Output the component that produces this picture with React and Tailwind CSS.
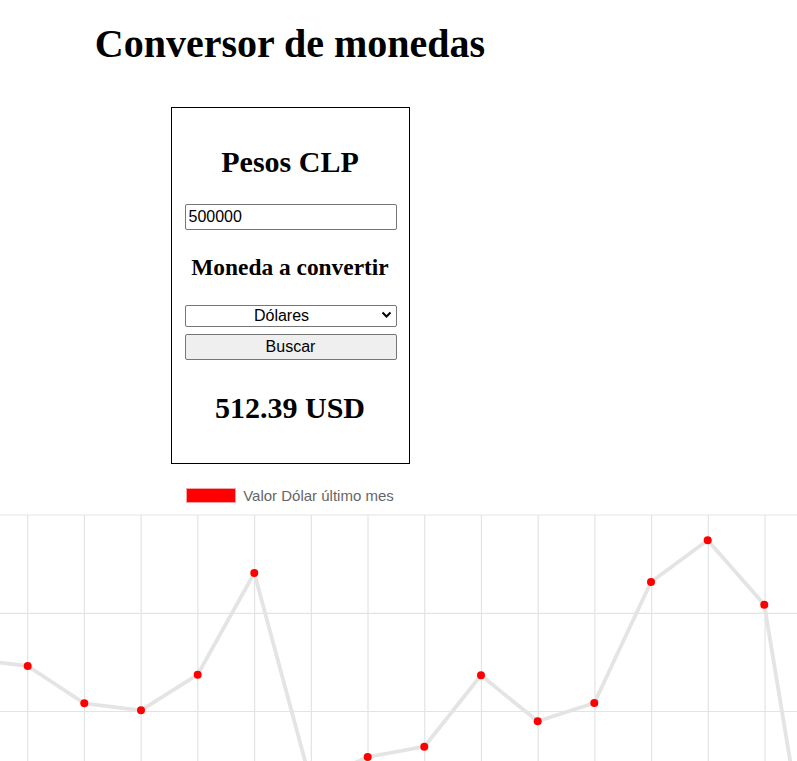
import { useState } from "react";

const puntos = [
  [-29, 149],
  [27.7, 156],
  [84.3, 193.3],
  [141, 200.3],
  [197.7, 164.7],
  [254.3, 63],
  [311, 273],
  [367.7, 247],
  [424.3, 236.7],
  [481, 165.3],
  [537.7, 211.3],
  [594.3, 193],
  [651, 72],
  [707.7, 30.3],
  [764.3, 94.7],
  [821, 437],
];

function Grafico() {
  const verticales = [];
  for (let i = 0; i < 15; i++) verticales.push(27.7 + i * 56.72);
  const linea = puntos.map(([x, y]) => `${x},${y}`).join(" ");

  return (
    <svg width="797" height="300" className="block" viewBox="0 0 797 300">
      {[5, 103.3, 201.5].map((y) => (
        <line key={y} x1="0" x2="797" y1={y} y2={y} stroke="#e3e3e3" strokeWidth="1.2" />
      ))}
      {verticales.map((x) => (
        <line key={x} x1={x} x2={x} y1="5" y2="300" stroke="#e3e3e3" strokeWidth="1.2" />
      ))}
      <polyline points={linea} fill="none" stroke="#e4e4e4" strokeWidth="3.8" strokeLinejoin="round" />
      {puntos.map(([x, y]) => (
        <circle key={x} cx={x} cy={y} r="4" fill="#ff0000" />
      ))}
    </svg>
  );
}

export default function App() {
  const [monto, setMonto] = useState("500000");

  return (
    <div className="min-h-screen bg-white text-black font-['Liberation_Serif',serif] overflow-hidden">
      <div className="w-[580px] flex flex-col items-center">
        <h1 className="mt-[21px] text-[40px] font-bold leading-[46px]">Conversor de monedas</h1>

        <div className="mt-[40px] w-[239px] border border-black flex flex-col items-center pt-[37px] pb-[38px]">
          <h2 className="text-[30px] font-bold leading-[34px]">Pesos CLP</h2>
          <input
            value={monto}
            onChange={(e) => setMonto(e.target.value)}
            className="mt-[25px] ml-[1px] w-[212px] h-[26px] px-[3px] border border-[#767676] rounded-[2px] bg-white font-['Liberation_Sans',Arial,sans-serif] text-[16px] outline-none"
          />
          <h3 className="mt-[24px] text-[23.4px] font-bold leading-[27px]">Moneda a convertir</h3>
          <div className="relative mt-[23px] ml-[1px] w-[212px]">
            <select className="w-[212px] h-[22px] appearance-none border border-[#767676] rounded-[2px] bg-white text-center pr-[18px] font-['Liberation_Sans',Arial,sans-serif] text-[16px] leading-[20px]">
              <option>Dólares</option>
            </select>
            <svg
              className="absolute right-[5px] top-[7px] pointer-events-none"
              width="11"
              height="8"
              viewBox="0 0 11 8"
            >
              <path d="M1.5 1.5 L5.5 5.5 L9.5 1.5" fill="none" stroke="#000" strokeWidth="2" />
            </svg>
          </div>
          <button className="mt-[6px] ml-[1px] w-[212px] h-[26px] border border-[#767676] rounded-[2px] bg-[#efefef] font-['Liberation_Sans',Arial,sans-serif] text-[16px] leading-[20px]">
            Buscar
          </button>
          <h2 className="mt-[31px] text-[30px] font-bold leading-[34px]">512.39 USD</h2>
        </div>

        <div className="mt-[24px] flex items-center h-[15px] gap-[7px]">
          <span className="block w-[50px] h-[15px] bg-[#ff0000] border border-[#f5a3a3]" />
          <span className="text-[15px] leading-[15px] text-[#666666] font-['Liberation_Sans',Arial,sans-serif]">
            Valor Dólar último mes
          </span>
        </div>
      </div>

      <div className="mt-[7px]">
        <Grafico />
      </div>
    </div>
  );
}
